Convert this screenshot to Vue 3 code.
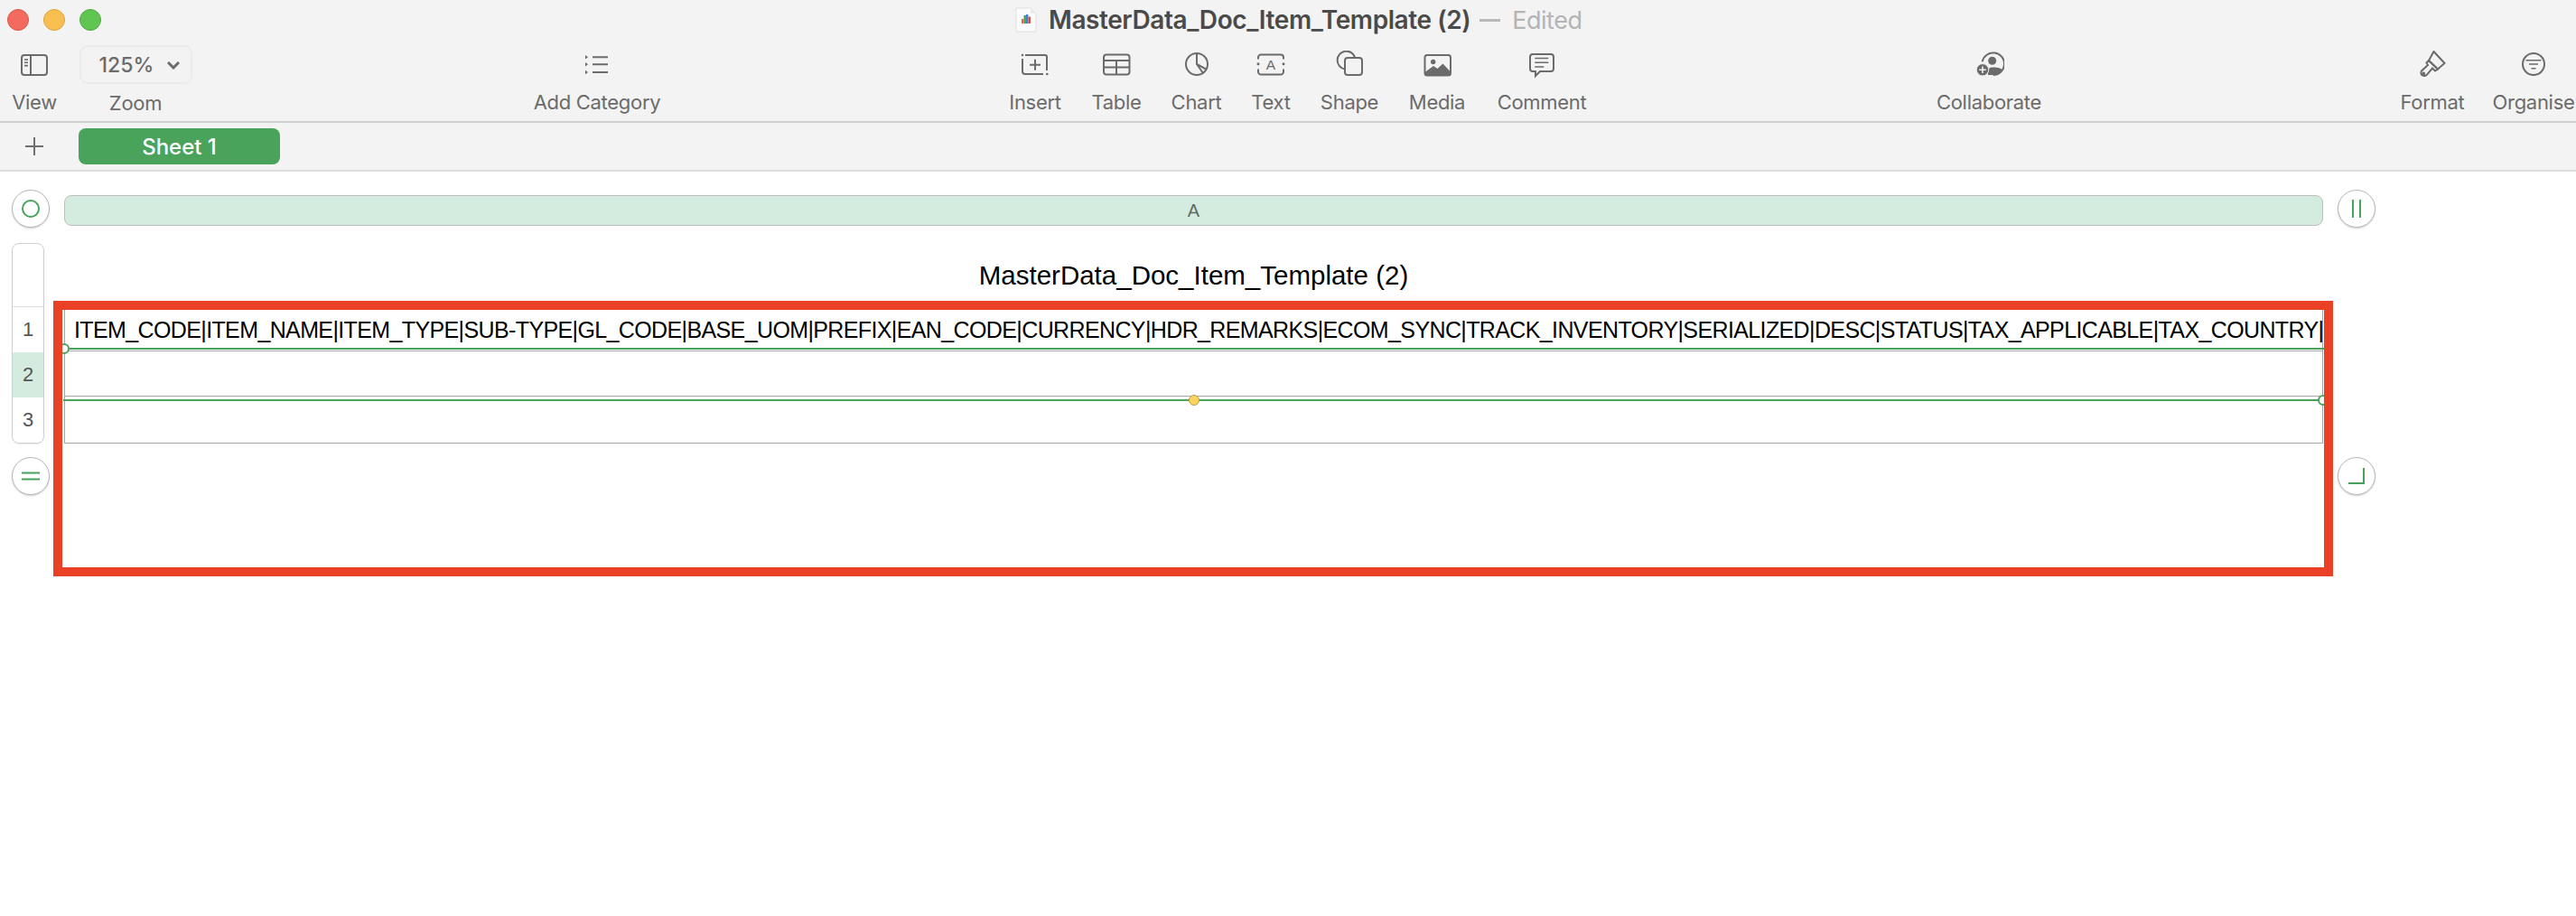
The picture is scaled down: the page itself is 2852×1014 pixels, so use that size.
<script setup>
const rows = [
  { n: 1, selected: false, text: 'ITEM_CODE|ITEM_NAME|ITEM_TYPE|SUB-TYPE|GL_CODE|BASE_UOM|PREFIX|EAN_CODE|CURRENCY|HDR_REMARKS|ECOM_SYNC|TRACK_INVENTORY|SERIALIZED|DESC|STATUS|TAX_APPLICABLE|TAX_COUNTRY|' },
  { n: 2, selected: true, text: '' },
  { n: 3, selected: false, text: '' }
]
</script>

<template>
  <div class="app">
    <header class="chrome">
      <div class="titlebar">
        <div class="lights">
          <i class="light red"></i>
          <i class="light amber"></i>
          <i class="light green"></i>
        </div>
        <div class="doc-title">
          <svg class="file" width="24" height="28" viewBox="0 0 24 28">
            <path d="M1 1h16l6 6v20H1z" fill="#fcfcfc" stroke="#dedede" />
            <path d="M17 1v6h6z" fill="#ececec" />
            <rect x="7" y="13" width="2.400" height="5" fill="#e8672c" />
            <rect x="9.500" y="9" width="2.400" height="9" fill="#3fa24c" />
            <rect x="12" y="8" width="2.400" height="10" fill="#3d7fd9" />
            <rect x="14.500" y="10.500" width="2.400" height="7.500" fill="#d8453c" />
          </svg>
          <span class="doc-name">MasterData_Doc_Item_Template (2)</span>
          <span class="doc-dash"></span>
          <span class="doc-state">Edited</span>
        </div>
      </div>

      <div class="tools">
        <div class="tool t-view">
          <svg width="30" height="32" viewBox="0 0 30 32" class="ico">
            <rect x="1" y="5" width="28" height="22" rx="3" />
            <path d="M11 5v22" />
            <path class="thin" d="M4 10h4M4 13.300h4M4 16.600h4" />
          </svg>
          <span>View</span>
        </div>
        <div class="tool t-zoom">
          <div class="zoom-pill">
            <span>125%</span>
            <svg width="14" height="10" viewBox="0 0 14 10" class="ico heavy"><path d="M1 2l6 6 6-6" /></svg>
          </div>
          <span>Zoom</span>
        </div>
        <div class="tool t-cat">
          <svg width="28" height="32" viewBox="0 0 28 32" class="ico">
            <path d="M9 7.300h17M9 15.300h17M9 24h17" />
            <path class="solid" d="M1 5l3 2.300-3 2.300zM1 13l3 2.300-3 2.300zM1 21.700l3 2.300-3 2.300z" />
          </svg>
          <span>Add Category</span>
        </div>
        <div class="tool t-insert">
          <svg width="32" height="32" viewBox="0 0 32 32" class="ico">
            <path d="M5 5h22a2 2 0 0 1 2 2v15M2 9v14a3 3 0 0 0 3 3h20" />
            <path d="M10 15.700h12M16 9.700v12" />
            <circle class="solid" cx="2" cy="5" r="1.300" />
            <circle class="solid" cx="29.300" cy="26" r="1.300" />
          </svg>
          <span>Insert</span>
        </div>
        <div class="tool t-table">
          <svg width="32" height="32" viewBox="0 0 32 32" class="ico">
            <rect x="2" y="4.500" width="28.500" height="22" rx="3" />
            <path d="M2 11h28.500M2 18.500h28.500M16 11v15.500" />
          </svg>
          <span>Table</span>
        </div>
        <div class="tool t-chart">
          <svg width="28" height="32" viewBox="0 0 28 32" class="ico">
            <circle cx="14" cy="15" r="12" />
            <path d="M14 3v12l11 6M14 15l7 10" />
          </svg>
          <span>Chart</span>
        </div>
        <div class="tool t-text">
          <svg width="32" height="32" viewBox="0 0 32 32" class="ico">
            <path d="M2 9.500V7.500a3 3 0 0 1 3-3h22a3 3 0 0 1 3 3v2M2 20.500v3a3 3 0 0 0 3 3h22a3 3 0 0 0 3-3v-3" />
            <circle class="solid" cx="2" cy="14.700" r="1.500" />
            <circle class="solid" cx="30" cy="14.700" r="1.500" />
            <text x="16" y="21" text-anchor="middle" class="ico-text">A</text>
          </svg>
          <span>Text</span>
        </div>
        <div class="tool t-shape">
          <svg width="32" height="32" viewBox="0 0 32 32" class="ico">
            <path d="M11 20.500A10 10 0 1 1 22.300 8" />
            <rect x="11" y="8" width="19" height="19" rx="3" />
          </svg>
          <span>Shape</span>
        </div>
        <div class="tool t-media">
          <svg width="32" height="32" viewBox="0 0 32 32">
            <rect x="2.500" y="5" width="28.500" height="22.500" rx="2.500" fill="none" stroke="#6b6b6b" stroke-width="2" />
            <circle cx="11.700" cy="12.500" r="2.700" fill="#6b6b6b" />
            <path d="M2.500 24l9.500-7 4.500 3 6-5.500 8.500 9v2a2.500 2.500 0 0 1-2.500 2.500H5a2.500 2.500 0 0 1-2.500-2.500z" fill="#6b6b6b" />
          </svg>
          <span>Media</span>
        </div>
        <div class="tool t-comment">
          <svg width="30" height="32" viewBox="0 0 30 32" class="ico">
            <path d="M5 4h20a3 3 0 0 1 3 3v13a3 3 0 0 1-3 3H13l-5 5v-5H5a3 3 0 0 1-3-3V7a3 3 0 0 1 3-3z" />
            <path class="thin" d="M7.300 8.500h15M7.300 13.300h15M7.300 18h10" />
          </svg>
          <span>Comment</span>
        </div>
        <div class="tool t-collab">
          <svg width="34" height="32" viewBox="0 0 34 32">
            <path d="M9.700 12.300A12.300 12.300 0 1 1 21.700 27" fill="none" stroke="#6b6b6b" stroke-width="2" />
            <circle cx="20.700" cy="11.300" r="4.500" fill="#6b6b6b" />
            <path d="M16 27v-4q0-4.500 5-4.500h3q5 0 8 2.500a12.300 12.300 0 0 1-10 6z" fill="#6b6b6b" />
            <circle cx="10" cy="21.300" r="6.700" fill="#6b6b6b" stroke="#f3f3f3" stroke-width="1" />
            <path d="M10 17.500v7.600M6.200 21.300h7.600" stroke="#f3f3f3" stroke-width="1.600" />
          </svg>
          <span>Collaborate</span>
        </div>
        <div class="tool t-format">
          <svg width="30" height="32" viewBox="0 0 30 32" class="ico">
            <path d="M16.500 1l12 13-7.500 6.500-10-9.500z" />
            <path d="M11 11l10 9.500-3 2-3-3L9 26.500a3.500 3.500 0 0 1-6-4l7-6.500-1.500-2.500z" />
            <circle cx="5.200" cy="25.500" r="1" />
          </svg>
          <span>Format</span>
        </div>
        <div class="tool t-organise">
          <svg width="28" height="32" viewBox="0 0 28 32" class="ico">
            <circle cx="14" cy="15" r="12" />
            <path class="thin" d="M5.500 10.700h17M9 15h10M11.500 19.700h5" />
          </svg>
          <span>Organise</span>
        </div>
      </div>

      <div class="sheetbar">
        <svg class="add" width="22" height="22" viewBox="0 0 22 22"><path d="M11 1v20M1 11h20" /></svg>
        <div class="tab">Sheet 1</div>
      </div>
    </header>

    <main class="canvas">
      <div class="round"><i class="glyph-o"></i></div>
      <div class="col-head">A</div>
      <div class="round">
        <svg width="18" height="22" viewBox="0 0 18 22"><path d="M5 1v20M13 1v20" /></svg>
      </div>

      <div class="rail">
        <div class="rail-corner"></div>
        <div v-for="r in rows" :key="r.n" class="rail-cell" :class="{ on: r.selected }">{{ r.n }}</div>
      </div>
      <div class="sheet">
        <h1 class="sheet-title">MasterData_Doc_Item_Template (2)</h1>
        <div class="table">
          <div v-for="r in rows" :key="r.n" class="cell">{{ r.text }}</div>
          <div class="selection">
            <i class="handle h-left"></i>
            <i class="dot"></i>
            <i class="handle h-right"></i>
          </div>
        </div>
      </div>
      <div></div>

      <div class="round">
        <svg width="22" height="22" viewBox="0 0 22 22"><path d="M1 7.500h20M1 14.500h20" /></svg>
      </div>
      <div></div>
      <div class="round">
        <svg width="20" height="20" viewBox="0 0 20 20"><path d="M18 1v17H1" /></svg>
      </div>

      <div class="callout"></div>
    </main>
  </div>
</template>

<style>
html, body { margin: 0; background: #fff; }
</style>

<style scoped>
.app {
  width: 2852px;
  height: 1014px;
  overflow: hidden;
  background: #fff;
  font-family: "Liberation Sans", Arial, sans-serif;
}
.chrome { background: #f3f3f3; }

.titlebar { height: 44px; display: flex; align-items: center; }
.lights { display: flex; gap: 16px; padding-left: 8px; width: 1124px; box-sizing: border-box; }
.light { width: 24px; height: 24px; border-radius: 50%; box-sizing: border-box; border: 1px solid; }
.red { background: #f46a5e; border-color: #dc5449; }
.amber { background: #f6bf4f; border-color: #dba23a; }
.green { background: #61c554; border-color: #4ea93f; }
.doc-title { display: flex; align-items: center; }
.file { margin-right: 13px; }
.doc-name { font-family: Inter, sans-serif; font-size: 28px; font-weight: 600; color: #4a4a4a; letter-spacing: -0.42px; white-space: nowrap; }
.doc-dash { width: 23px; height: 3px; background: #b8b8b8; margin: 0 13px 0 10px; }
.doc-state { font-family: Inter, sans-serif; font-size: 27px; color: #b4b4b4; letter-spacing: -0.5px; }

.tools {
  height: 90px;
  display: flex;
  border-bottom: 2px solid #d0d0d0;
}
.tool {
  flex: none;
  display: flex;
  flex-direction: column;
  align-items: center;
  font-family: Inter, sans-serif;
  font-size: 22px;
  color: #6b6b6b;
  white-space: nowrap;
  padding-top: 12px;
  box-sizing: border-box;
}
.tool > svg { flex: none; }
.tool > span { margin-top: 11px; line-height: 28px; letter-spacing: -0.3px; }
.ico { fill: none; stroke: #6b6b6b; stroke-width: 2; }
.ico.heavy { stroke-width: 3; }
.ico .solid { fill: #6b6b6b; stroke: none; }
.ico .thin { stroke-width: 1.600; }
.ico-text { font-family: "Liberation Sans", sans-serif; font-size: 15.500px; fill: #6b6b6b; stroke: none; }

.t-view { width: 76px; }
.t-zoom { width: 124px; margin-left: 12px; padding-top: 6px; }
.t-cat { width: 160px; margin-left: 369px; }
.t-insert { width: 92px; margin-left: 359px; }
.t-table { width: 88px; }
.t-chart { width: 89px; }
.t-text { width: 76px; }
.t-shape { width: 98px; }
.t-media { width: 96px; }
.t-comment { width: 136px; }
.t-collab { width: 160px; margin-left: 347px; }
.t-format { width: 120px; margin-left: 351px; }
.t-organise { width: 104px; }

.zoom-pill {
  width: 125px;
  height: 43px;
  flex: none;
  box-sizing: border-box;
  border: 2px solid #ebebeb;
  border-radius: 9px;
  display: flex;
  align-items: center;
  padding-left: 20px;
  gap: 15px;
  font-size: 23px;
  font-weight: 500;
}
.t-zoom > span { margin-top: 7px; }

.sheetbar {
  height: 52px;
  display: flex;
  align-items: center;
  border-bottom: 2px solid #dedede;
}
.add { margin-left: 27px; margin-right: 38px; fill: none; stroke: #6f6f6f; stroke-width: 2; }
.tab {
  width: 223px;
  height: 40px;
  border-radius: 8px;
  background: #4aa35a;
  color: #fff;
  font-family: Inter, sans-serif;
  font-size: 24px;
  font-weight: 500;
  display: flex;
  align-items: center;
  justify-content: center;
}

.canvas {
  position: relative;
  display: grid;
  grid-template-columns: 42px 2501px 42px;
  column-gap: 16px;
  grid-template-rows: 42px 224px 42px;
  row-gap: 15px;
  padding: 20px 0 0 13px;
}
.col-head { margin-top: 6px; }

.round {
  width: 42px;
  height: 42px;
  box-sizing: border-box;
  border-radius: 50%;
  border: 1px solid #b8b8b8;
  box-shadow: 0 1px 2px rgba(0, 0, 0, 0.18);
  background: #fff;
  display: flex;
  align-items: center;
  justify-content: center;
}
.round svg { fill: none; stroke: #46a35a; stroke-width: 2; }
.glyph-o { width: 20px; height: 20px; box-sizing: border-box; border: 2px solid #46a35a; border-radius: 50%; }

.col-head {
  height: 34px;
  box-sizing: border-box;
  border: 1px solid #bdbdbd;
  border-radius: 8px;
  background: #d4ecdf;
  color: #5f6b64;
  font-size: 20px;
  display: flex;
  align-items: center;
  justify-content: center;
}

.rail {
  width: 36px;
  height: 222px;
  box-sizing: border-box;
  border: 1px solid #cfcfcf;
  border-radius: 8px;
  overflow: hidden;
  margin-top: 2px;
  box-shadow: 0 1px 1px rgba(0, 0, 0, 0.08);
}
.rail-corner { height: 69px; border-bottom: 1px solid #dcdcdc; }
.rail-cell {
  height: 50px;
  display: flex;
  align-items: center;
  justify-content: center;
  font-size: 22px;
  color: #555;
}
.rail-cell.on { background: #d4ecdf; }

.sheet { margin-top: 2px; }
.sheet-title {
  margin: 0;
  height: 70px;
  box-sizing: border-box;
  padding-top: 2px;
  display: flex;
  align-items: center;
  justify-content: center;
  font-size: 29.500px;
  font-weight: 400;
  color: #000;
}
.table {
  position: relative;
  height: 152px;
  box-sizing: border-box;
  border-left: 1px solid #a6a6a6;
  border-right: 1px solid #a6a6a6;
  border-bottom: 1px solid #a6a6a6;
}
.cell {
  height: 50px;
  box-sizing: border-box;
  border-bottom: 1px solid #a6a6a6;
  padding: 2px 0 0 10px;
  font-size: 25px;
  letter-spacing: -0.62px;
  line-height: 48px;
  color: #000;
  white-space: nowrap;
}
.cell:nth-child(3) { border-bottom: 0; }

.selection {
  position: absolute;
  left: -2px;
  right: -2px;
  top: 46px;
  height: 59px;
  box-sizing: border-box;
  border-top: 2px solid #4aa35a;
  border-bottom: 2px solid #4aa35a;
}
.handle {
  position: absolute;
  width: 12px;
  height: 12px;
  box-sizing: border-box;
  border: 2px solid #4aa35a;
  border-radius: 50%;
  background: #fff;
}
.h-left { left: -5px; top: -7px; }
.h-right { right: -5px; bottom: -7px; }
.dot {
  position: absolute;
  left: 50%;
  bottom: -7px;
  margin-left: -6px;
  width: 12px;
  height: 12px;
  box-sizing: border-box;
  border: 1px solid #b99c4c;
  border-radius: 50%;
  background: #fbd55b;
}

.callout {
  position: absolute;
  left: 59px;
  top: 143px;
  width: 2524px;
  height: 305px;
  box-sizing: border-box;
  border: 10px solid #ea4026;
  pointer-events: none;
}
</style>
